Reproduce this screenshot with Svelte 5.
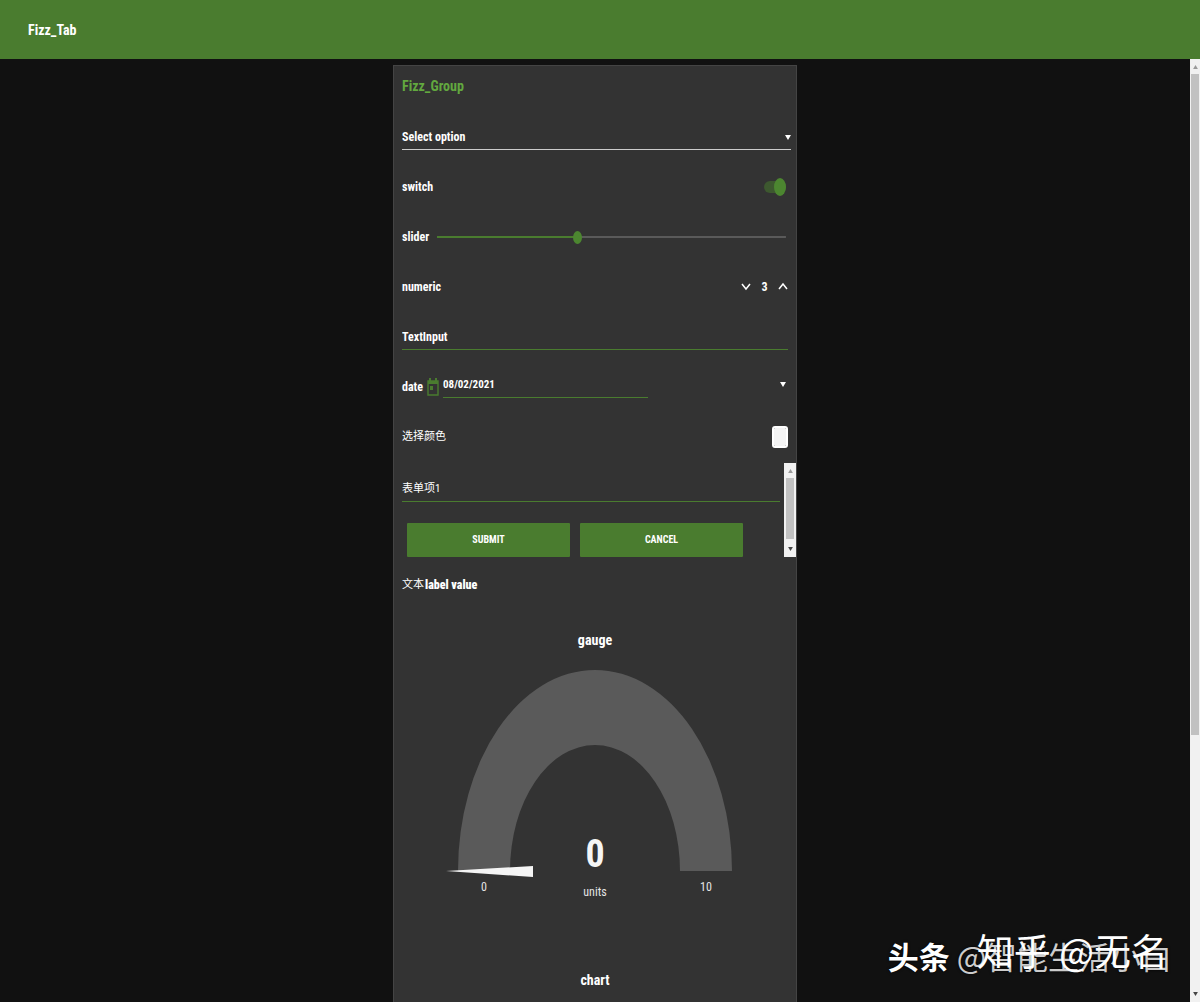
<script>
  let option = $state('');
  let enabled = $state(true);
  let level = $state(4);
  let count = $state(3);
  let text = $state('');
  let date = $state('08/02/2021');
  let color = $state('#f4f4f4');
  let item = $state('');
  const max = 10;
  let fill = $derived((level / max) * 100);
</script>

<div class="page">
  <header class="bar"><h1>Fizz_Tab</h1></header>

  <div class="view">
    <main>
      <section class="group">
        <h2>Fizz_Group</h2>

        <div class="row">
          <div class="select-wrap">
            <select class="line" aria-label="Select option" bind:value={option}>
              <option value="">Select option</option>
              <option value="1">1</option>
              <option value="2">2</option>
            </select>
            <svg class="caret" viewBox="0 0 6 5" aria-hidden="true"><path d="M0 0h6L3 5z" /></svg>
          </div>
        </div>

        <div class="row">
          <label for="sw">switch</label>
          <input id="sw" class="switch" type="checkbox" bind:checked={enabled} />
        </div>

        <div class="row slider-row">
          <label for="sl">slider</label>
          <input id="sl" class="slider" type="range" min="0" {max} bind:value={level} style="--fill: {fill}%" />
        </div>

        <div class="row">
          <label for="num">numeric</label>
          <div class="numeric">
            <button type="button" aria-label="decrease" onclick={() => count--}>
              <svg viewBox="0 0 8 8" aria-hidden="true"><path d="M0 1l4 5 4-5" /></svg>
            </button>
            <input id="num" type="text" bind:value={count} />
            <button type="button" aria-label="increase" onclick={() => count++}>
              <svg viewBox="0 0 8 8" aria-hidden="true"><path d="M0 6l4-5 4 5" /></svg>
            </button>
          </div>
        </div>

        <div class="row">
          <input class="field" type="text" placeholder="TextInput" aria-label="TextInput" bind:value={text} />
        </div>

        <div class="row date-row">
          <label for="date">date</label>
          <svg class="calendar" viewBox="0 0 12 18" aria-hidden="true">
            <path d="M1 3h10v14H1z" fill="none" stroke="currentColor" stroke-width="1.4" />
            <path d="M1 3h10v3H1zM2 0h2v4H2zM8 0h2v4H8zM3 8h3v4H3z" fill="currentColor" />
          </svg>
          <input id="date" class="date" type="text" bind:value={date} />
          <button type="button" class="open" aria-label="open calendar">
            <svg viewBox="0 0 6 5" aria-hidden="true"><path d="M0 0h6L3 5z" /></svg>
          </button>
        </div>

        <div class="row">
          <label for="color">选择颜色</label>
          <input id="color" class="color" type="color" bind:value={color} />
        </div>

        <div class="form-box">
          <form onsubmit={(e) => e.preventDefault()}>
            <input class="field" type="text" placeholder="表单项1" aria-label="表单项1" bind:value={item} />
            <div class="actions">
              <button type="submit">SUBMIT</button>
              <button type="reset">CANCEL</button>
            </div>
          </form>
          <div class="scroll" aria-hidden="true">
            <svg viewBox="0 0 6 5"><path class="off" d="M0 5h6L3 0z" /></svg>
            <div class="thumb"></div>
            <svg viewBox="0 0 6 5"><path d="M0 0h6L3 5z" /></svg>
          </div>
        </div>

        <div class="row text-row"><span class="text-label">文本</span><b>label value</b></div>

        <svg class="gauge" viewBox="0 0 402 300" role="img" aria-label="gauge 0 units">
          <text class="caption" x="201" y="35">gauge</text>
          <path fill="#5a5a5a" d="M64 261A137 201 0 0 1 338 261H286A85 126 0 0 0 116 261z" />
          <path fill="#f5f5f5" d="M52 261L139 256V267z" />
          <text class="value" x="201" y="257">0</text>
          <text x="90" y="281">0</text>
          <text x="201" y="286">units</text>
          <text x="312" y="281">10</text>
        </svg>

        <h3>chart</h3>
      </section>
    </main>

    <div class="scroll page-scroll" aria-hidden="true">
      <svg viewBox="0 0 6 5"><path class="off" d="M0 5h6L3 0z" /></svg>
      <div class="thumb"></div>
      <svg viewBox="0 0 6 5"><path d="M0 0h6L3 5z" /></svg>
    </div>
  </div>

  <div class="mark mark-back"><b>头条</b> @智能生活小白</div>
  <div class="mark mark-front">知乎 @无名</div>
</div>

<style>
  :global(body) {
    margin: 0;
    background: #111;
  }
  .page {
    --green: #4a7c2f;
    position: relative;
    display: flex;
    flex-direction: column;
    min-height: 100vh;
    background: #111;
    color: #fff;
    font: bold 12px/20px 'Roboto Condensed', Roboto, 'Noto Sans CJK SC', sans-serif;
  }
  input,
  button,
  select {
    box-sizing: border-box;
    margin: 0;
    padding: 0;
    border: 0;
    border-radius: 0;
    outline: 0;
    background: none;
    color: inherit;
    font: inherit;
    appearance: none;
  }
  h1,
  h2,
  h3 {
    margin: 0;
    font-size: 14px;
    line-height: 20px;
  }
  .bar {
    display: flex;
    align-items: center;
    height: 59px;
    padding: 0 28px;
    background: var(--green);
  }
  .view {
    flex: 1;
    display: flex;
  }
  main {
    flex: 1;
    display: flex;
    justify-content: center;
    padding-top: 6px;
  }
  .group {
    box-sizing: border-box;
    width: 100%;
    max-width: 404px;
    border: 1px solid #444;
    border-bottom: 0;
    background: #333;
  }
  h2 {
    padding: 10px 8px 16px;
    color: #62a83f;
  }
  .row {
    display: flex;
    align-items: center;
    justify-content: space-between;
    box-sizing: border-box;
    height: 50px;
    padding: 0 8px;
  }
  .select-wrap {
    position: relative;
    flex: 1;
    margin-right: -3px;
  }
  .line {
    display: block;
    width: 100%;
    height: 26px;
    border-bottom: 1px solid #ccc;
  }
  .line option {
    color: #111;
  }
  .caret {
    position: absolute;
    right: 0;
    top: 11px;
    pointer-events: none;
  }
  .caret,
  .open svg {
    width: 6px;
    height: 5px;
    fill: #fff;
  }
  .switch {
    position: relative;
    width: 22px;
    height: 12px;
    margin-right: 2px;
    border-radius: 6px;
    background: #3d582f;
  }
  .switch::after {
    content: '';
    position: absolute;
    left: 0;
    top: -3px;
    width: 12px;
    height: 18px;
    border-radius: 50%;
    background: #aaa;
  }
  .switch:checked::after {
    left: 10px;
    background: #4c8630;
  }
  .slider-row {
    gap: 8px;
  }
  .slider {
    flex: 1;
    height: 14px;
    margin-right: 2px;
    background: linear-gradient(90deg, var(--green) var(--fill), #5a5a5a 0) center / 100% 2px no-repeat;
  }
  .slider::-webkit-slider-thumb {
    appearance: none;
    width: 9px;
    height: 13px;
    border-radius: 50%;
    background: #4c8630;
  }
  .numeric {
    display: flex;
    align-items: center;
  }
  .numeric input {
    width: 27px;
    text-align: center;
  }
  .numeric button {
    display: flex;
    padding: 4px 1px;
  }
  .numeric svg {
    width: 8px;
    height: 8px;
    overflow: visible;
    fill: none;
    stroke: #fff;
    stroke-width: 1.5;
  }
  .field {
    width: 100%;
    height: 26px;
    border-bottom: 1px solid var(--green);
  }
  .field::placeholder {
    color: #fff;
    opacity: 1;
  }
  .date-row {
    justify-content: flex-start;
    gap: 4px;
  }
  .calendar {
    width: 12px;
    height: 18px;
    color: var(--green);
  }
  .date {
    width: 53%;
    height: 22px;
    padding-bottom: 4px;
    border-bottom: 1px solid var(--green);
    font-size: 11px;
  }
  .open {
    display: flex;
    margin: 0 2px 6px auto;
  }
  label[for='color'],
  .text-label {
    font-size: 11px;
    font-weight: normal;
  }
  .color {
    width: 16px;
    height: 22px;
    border: 2px solid #fff;
    border-radius: 3px;
  }
  .color::-webkit-color-swatch-wrapper {
    padding: 0;
  }
  .color::-webkit-color-swatch {
    border: 0;
  }
  .form-box {
    display: flex;
    height: 94px;
    margin: 1px 0 3px;
  }
  form {
    flex: 1;
    padding: 13px 4px 0 8px;
  }
  form .field {
    display: block;
    font-size: 11px;
    font-weight: normal;
  }
  .actions {
    display: grid;
    grid-template-columns: 1fr 1fr;
    gap: 10px;
    padding: 21px 37px 0 5px;
  }
  .actions button {
    height: 34px;
    border-radius: 1px;
    background: var(--green);
    font-size: 10px;
  }
  .scroll {
    display: flex;
    flex-direction: column;
    align-items: center;
    box-sizing: border-box;
    width: 12px;
    padding: 6px 0;
    background: #f1f1f1;
  }
  .scroll svg {
    width: 5px;
    height: 4px;
    fill: #444;
  }
  .scroll .off {
    fill: #999;
  }
  .thumb {
    flex: 1;
    width: 8px;
    margin: 5px 0 8px;
    background: #c1c1c1;
  }
  .page-scroll {
    width: 10px;
  }
  .page-scroll .thumb {
    flex: 0 0 71%;
    margin-bottom: auto;
  }
  .text-row {
    justify-content: flex-start;
    gap: 1px;
  }
  .gauge {
    display: block;
    width: 100%;
  }
  .gauge text {
    fill: #e4e4e4;
    font-size: 12px;
    font-weight: normal;
    text-anchor: middle;
  }
  .gauge .caption {
    fill: #fff;
    font-size: 14px;
    font-weight: bold;
  }
  .gauge .value {
    fill: #f5f5f5;
    font-size: 38px;
    font-weight: bold;
  }
  h3 {
    padding: 60px 0 12px;
    text-align: center;
  }
  .mark {
    position: absolute;
    font-family: 'Noto Sans CJK SC', sans-serif;
    font-weight: 400;
    white-space: nowrap;
  }
  .mark-back {
    right: 28px;
    bottom: 26px;
    color: #ccc;
    font-size: 31px;
    line-height: 40px;
    text-shadow: 0 0 3px #000;
  }
  .mark-back b {
    color: #fff;
    font-weight: 700;
  }
  .mark-front {
    right: 32px;
    bottom: 30px;
    font-size: 37px;
    line-height: 44px;
  }
</style>
